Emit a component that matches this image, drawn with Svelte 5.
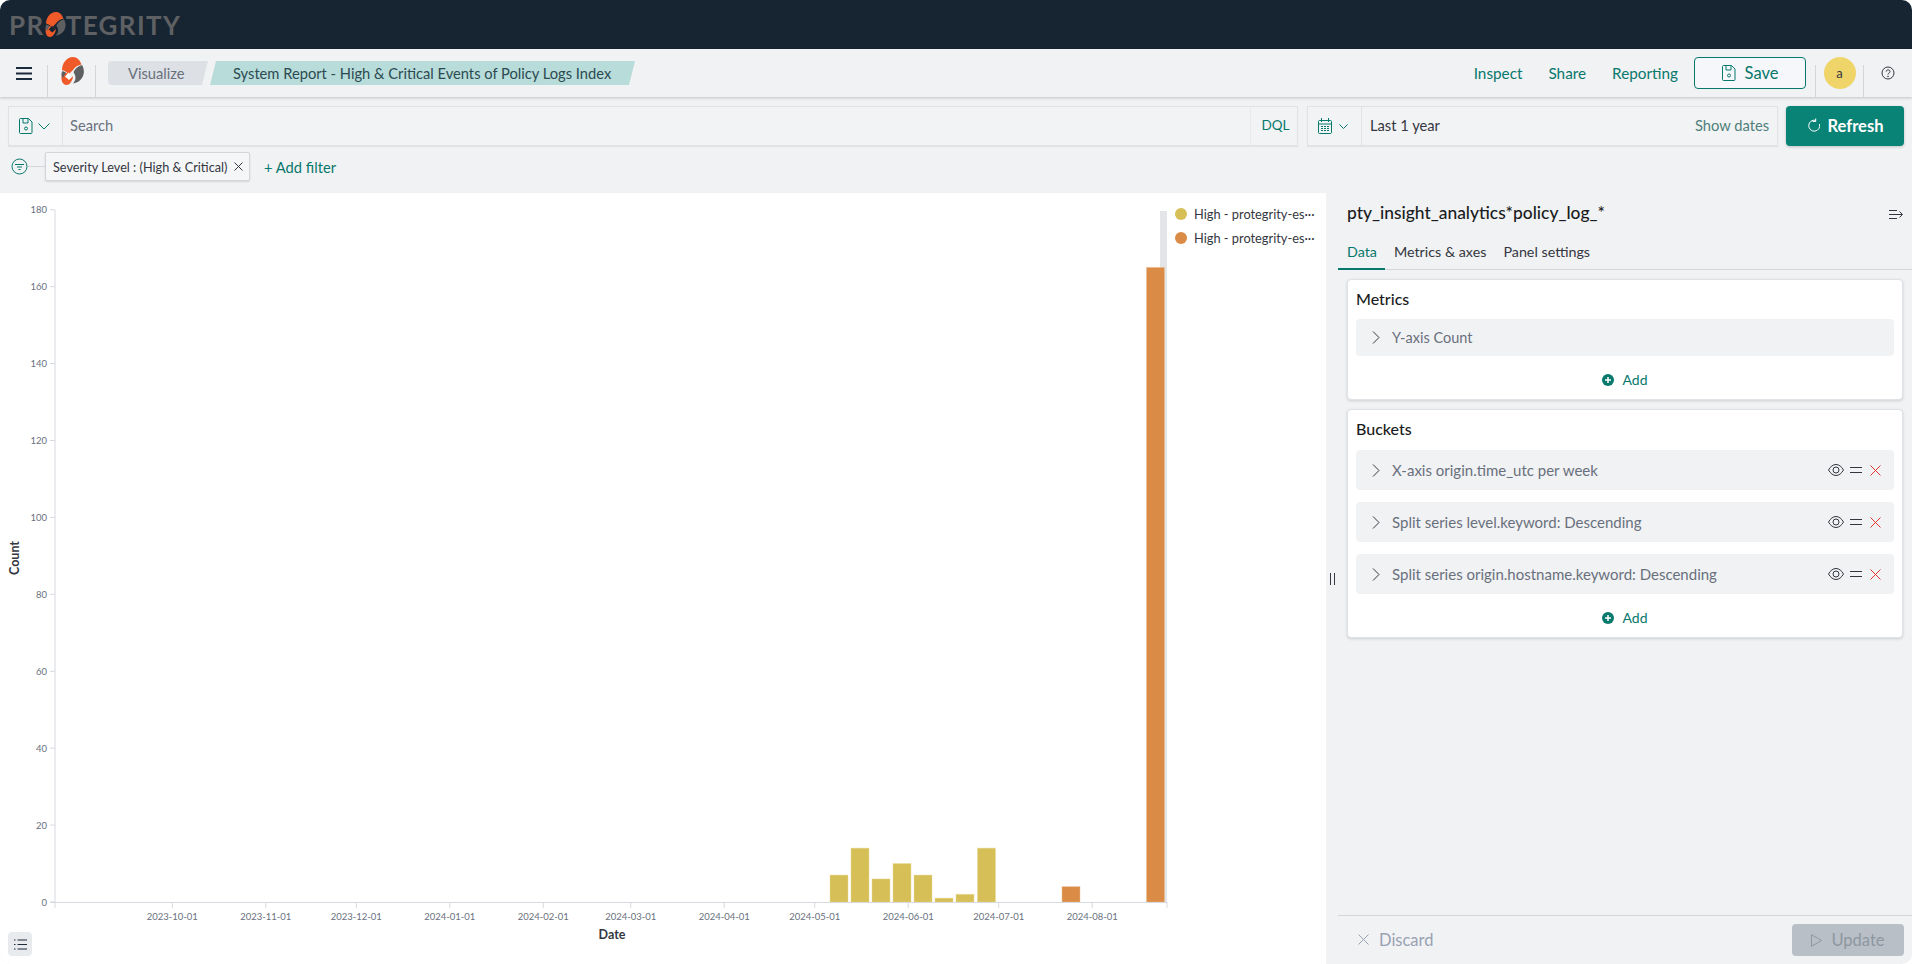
<script>
  // chart geometry, all in page pixels
  const y0 = 902
  const perCount = 3.846
  const yTicks = [0, 20, 40, 60, 80, 100, 120, 140, 160, 180]
  const xTicks = [
    [172.3, '2023-10-01'], [265.8, '2023-11-01'], [356.3, '2023-12-01'], [449.8, '2024-01-01'],
    [543.3, '2024-02-01'], [630.7, '2024-03-01'], [724.2, '2024-04-01'], [814.7, '2024-05-01'],
    [908.2, '2024-06-01'], [998.7, '2024-07-01'], [1092.2, '2024-08-01']
  ]
  const bars = [
    { x: 830, n: 7, c: 'y' }, { x: 851, n: 14, c: 'y' }, { x: 872, n: 6, c: 'y' }, { x: 893, n: 10, c: 'y' },
    { x: 914, n: 7, c: 'y' }, { x: 935, n: 1, c: 'y' }, { x: 956, n: 2, c: 'y' }, { x: 977.5, n: 14, c: 'y' },
    { x: 1062, n: 4, c: 'o' }, { x: 1146.5, n: 165, c: 'o' }
  ]
  const buckets = [
    ['X-axis', 'origin.time_utc per week'],
    ['Split series', 'level.keyword: Descending'],
    ['Split series', 'origin.hostname.keyword: Descending']
  ]
</script>

{#snippet mark(w, h, gap)}
  <svg class="mark" viewBox="0 0 24 28" width={w} height={h}>
    <path fill="#f05a28" d="M2 13C2 6 7 0 13 0c4 0 7 3 8.500 7.500C18 8 15 10 13 13l-4 4c-2-2-4-3-7-4z" />
    <path fill="#5e5f61" d="M22 8c2.500 4 2.500 9 0 13-2 3-5 5-9 5.500 2.500-3 3-5.500 2-8.500l-1.500-3C15.500 11.500 18 9 22 8z" />
    <path fill="#f05a28" d="M2 17c-1.500 5 0 11 4.500 11 3 0 5.500-3.500 6.500-8l-5-4.500z" />
    <path fill="#5e5f61" d="M2.500 14L6 15.500 3 21c-2-2-2-5-.5-7z" />
    <path fill={gap} d="M8.500 15.500l4 4L9 23l-4-3.500z" />
  </svg>
{/snippet}

<div class="app">
  <header class="topbar">
    <div class="brand">
      <span>PR</span>
      {@render mark(22, 25, '#172431')}
      <span>TEGRITY</span>
    </div>
  </header>

  <nav class="navbar">
    <div class="nav-cell menu">
      <svg width="16" height="13" viewBox="0 0 16 13"><path d="M0 1h16M0 6.500h16M0 12h16" stroke="#1a2b3c" stroke-width="2" /></svg>
    </div>
    <div class="nav-cell logo">
      {@render mark(24, 28, '#fff')}
    </div>
    <div class="crumbs">
      <span class="crumb first">Visualize</span>
      <span class="crumb last">System Report - High &amp; Critical Events of Policy Logs Index</span>
    </div>
    <div class="nav-right">
      <a class="nav-link" href="#inspect">Inspect</a>
      <a class="nav-link" href="#share">Share</a>
      <a class="nav-link" href="#reporting">Reporting</a>
      <button class="save">
        <svg width="14" height="16" viewBox="0 0 14 16" fill="none" stroke="#07786c"><path d="M1.500.5h8l3.500 3.500v10.500a1 1 0 0 1-1 1h-10.500a1 1 0 0 1-1-1v-13a1 1 0 0 1 1-1zM4 .5v4.500h5v-4.500" /><circle cx="7" cy="10.500" r="1.500" /></svg>
        Save
      </button>
      <div class="nav-cell avatar-cell"><span class="avatar">a</span></div>
      <div class="nav-cell help">
        <svg width="14" height="14" viewBox="0 0 14 14" fill="none" stroke="#343741"><circle cx="7" cy="7" r="6" /><path d="M5.200 5.600c0-2.300 3.800-2.300 3.800-.1 0 1.500-2 1.500-2 3" /><circle cx="7" cy="10.300" r=".4" /></svg>
      </div>
    </div>
  </nav>

  <div class="querybar">
    <div class="field search">
      <div class="prepend save-q">
        <svg width="14" height="16" viewBox="0 0 14 16" fill="none" stroke="#07786c"><path d="M1.500.5h8l3.500 3.500v10.500a1 1 0 0 1-1 1h-10.500a1 1 0 0 1-1-1v-13a1 1 0 0 1 1-1zM4 .5v4.500h5v-4.500" /><circle cx="7" cy="10.500" r="1.500" /></svg>
        <svg width="12" height="7" viewBox="0 0 12 7" fill="none" stroke="#07786c"><path d="M.5.500l5.500 5.500 5.500-5.500" /></svg>
      </div>
      <span class="placeholder">Search</span>
      <span class="dql">DQL</span>
    </div>
    <div class="field date">
      <div class="prepend cal">
        <svg width="14" height="16" viewBox="0 0 14 16" fill="none" stroke="#07786c"><rect x=".5" y="2.500" width="13" height="13" rx="1" /><path d="M.5 6h13M3.500 0v4M10.500 0v4" /><path stroke-dasharray="2 1" d="M3 8.500h8M3 10.500h8M3 12.500h8" /></svg>
        <svg width="9" height="5" viewBox="0 0 9 5" fill="none" stroke="#07786c"><path d="M.5.500l4 4 4-4" /></svg>
      </div>
      <span class="range">Last 1 year</span>
      <span class="show-dates">Show dates</span>
    </div>
    <button class="refresh">
      <svg width="13" height="15" viewBox="0 0 13 15" fill="none" stroke="#fff"><path d="M8.500 2.300a5.500 5.500 0 1 0 4 3.700M8.700 .5v3h-3" /></svg>
      Refresh
    </button>
  </div>

  <div class="filterbar">
    <svg class="filter-icon" width="17" height="17" viewBox="0 0 17 17" fill="none" stroke="#07786c"><circle cx="8.500" cy="8.500" r="7.500" /><path d="M4 6.500h9M6 9h5M7.500 11.500h2" /></svg>
    <span class="filter-line"></span>
    <span class="pill">Severity Level : (High &amp; Critical)
      <svg width="9" height="9" viewBox="0 0 9 9" stroke="#343741"><path d="M.5.500l8 8M8.500.500l-8 8" /></svg>
    </span>
    <a class="add-filter" href="#add">+ Add filter</a>
  </div>

  <main class="main">
    <section class="chart">
      <svg class="plot" viewBox="0 193 1172 771" width="1172" height="771">
        <rect x="1160" y="211" width="7" height="691" fill="#e3e5e8" />
        {#each bars as b}
          <rect class="bar {b.c}" x={b.x} y={y0 - b.n * perCount} width="18" height={b.n * perCount} />
        {/each}
        <path class="axis" d="M55 210v698M50 {y0}.5h1117M1167 {y0}v6" />
        <text class="title" transform="translate(19 558) rotate(-90)" text-anchor="middle">Count</text>
        <text class="title" x="612" y="939" text-anchor="middle">Date</text>
        {#each yTicks as t}
          <path class="axis" d="M50 {y0 - t * perCount}h5" />
          <text class="tick" x="47" y={y0 - t * perCount + 3.500} text-anchor="end">{t}</text>
        {/each}
        {#each xTicks as [x, label]}
          <path class="axis" d="M{x} {y0}v6" />
          <text class="tick" {x} y="920" text-anchor="middle">{label}</text>
        {/each}
      </svg>
      <div class="legend">
        <div class="legend-item"><i class="dot y"></i>High - protegrity-es···</div>
        <div class="legend-item"><i class="dot o"></i>High - protegrity-es···</div>
      </div>
      <button class="legend-toggle" aria-label="Toggle legend">
        <svg width="13" height="11" viewBox="0 0 13 11" stroke="#1a2b3c"><path d="M0 1h1.500M3.500 1h9.500M0 5.500h1.500M3.500 5.500h9.500M0 10h1.500M3.500 10h9.500" /></svg>
      </button>
    </section>

    <aside class="panel">
      <span class="resizer"></span>
      <div class="panel-head">
        <h2>pty_insight_analytics*policy_log_*</h2>
        <svg width="15" height="9" viewBox="0 0 15 9" fill="none" stroke="#343741"><path d="M0 .5h8M0 4.500h13M0 8.500h8M10.500 1.500l3 3-3 3" /></svg>
      </div>
      <div class="tabs">
        <span class="tab active">Data</span>
        <span class="tab">Metrics &amp; axes</span>
        <span class="tab">Panel settings</span>
      </div>
      <div class="cards">
        <section class="card">
          <h3>Metrics</h3>
          <div class="row metric">
            <svg class="chev" width="8" height="13" viewBox="0 0 8 13" fill="none" stroke="#343741"><path d="M1 .5l6 6-6 6" /></svg>
            <span>Y-axis Count</span>
          </div>
          <div class="add"><svg width="12" height="12" viewBox="0 0 12 12"><circle cx="6" cy="6" r="6" fill="#07786c" /><path d="M6 3v6M3 6h6" stroke="#fff" stroke-width="1.500" /></svg>Add</div>
        </section>
        <section class="card">
          <h3>Buckets</h3>
          <div class="rows">
            {#each buckets as [kind, desc]}
              <div class="row">
                <svg class="chev" width="8" height="13" viewBox="0 0 8 13" fill="none" stroke="#343741"><path d="M1 .5l6 6-6 6" /></svg>
                <span>{kind} {desc}</span>
                <div class="row-actions">
                  <svg width="16" height="12" viewBox="0 0 16 12" fill="none" stroke="#343741"><path d="M.5 6C2.500 2.500 5 .5 8 .5s5.500 2 7.500 5.500c-2 3.500-4.500 5.500-7.500 5.500S2.500 9.500.5 6z" /><circle cx="8" cy="6" r="3" /></svg>
                  <svg width="12" height="6" viewBox="0 0 12 6" stroke="#343741"><path d="M0 .5h12M0 5.500h12" /></svg>
                  <svg class="remove" width="11" height="11" viewBox="0 0 11 11" stroke="#e3342f"><path d="M.5.5l10 10M10.500.5l-10 10" /></svg>
                </div>
              </div>
            {/each}
          </div>
          <div class="add"><svg width="12" height="12" viewBox="0 0 12 12"><circle cx="6" cy="6" r="6" fill="#07786c" /><path d="M6 3v6M3 6h6" stroke="#fff" stroke-width="1.500" /></svg>Add</div>
        </section>
      </div>
      <footer class="panel-foot">
        <span class="discard">
          <svg width="11" height="11" viewBox="0 0 11 11" stroke="#98a2b3"><path d="M.5.5l10 10M10.500.5l-10 10" /></svg>
          Discard
        </span>
        <button class="update" disabled>
          <svg width="11" height="13" viewBox="0 0 11 13" fill="none" stroke="#8d97a2"><path d="M.5.7l10 5.800-10 5.800z" /></svg>
          Update
        </button>
      </footer>
    </aside>
  </main>
</div>

<style>
  :global(body) {
    margin: 0;
    background: #fff;
  }

  .app {
    width: 1912px;
    height: 964px;
    display: flex;
    flex-direction: column;
    overflow: hidden;
    border-radius: 10px;
    background: #f1f2f4;
    font-family: Lato, "Noto Sans", sans-serif;
    font-size: 14.700px;
    color: #343741;
  }

  button {
    font-family: inherit;
    cursor: pointer;
  }

  a {
    text-decoration: none;
  }

  .topbar {
    height: 49px;
    flex-shrink: 0;
    background: #172431;
    display: flex;
    align-items: center;
    padding-left: 9px;
  }

  .brand {
    display: flex;
    align-items: center;
    font-size: 26px;
    font-weight: 700;
    letter-spacing: 1.400px;
    color: #5e6063;
    line-height: 1;
  }

  .brand :global(.mark) {
    margin: 0 0 0 -1px;
  }

  .navbar {
    height: 48px;
    flex-shrink: 0;
    display: flex;
    align-items: flex-end;
    box-shadow: 0 1px 3px rgba(0, 0, 0, 0.2);
    position: relative;
  }

  .nav-cell {
    height: 32px;
    display: flex;
    align-items: center;
    justify-content: center;
    border-right: 1px solid #d3d6da;
    box-sizing: border-box;
  }

  .menu {
    width: 48px;
    padding-bottom: 16px;
  }

  .logo {
    width: 48px;
  }

  .logo :global(.mark) {
    margin-top: -20px;
  }

  .crumbs {
    align-self: center;
    display: flex;
    gap: 2px;
    margin-left: 12px;
  }

  .crumb {
    height: 24px;
    line-height: 24px;
    box-sizing: border-box;
    white-space: nowrap;
  }

  .first {
    width: 100px;
    padding-left: 20px;
    color: #69707d;
    background: #dde0e5;
    border-radius: 4px 0 0 4px;
    clip-path: polygon(0 0, 100% 0, calc(100% - 6px) 100%, 0 100%);
  }

  .last {
    width: 425px;
    padding-left: 23px;
    color: #2d4a52;
    background: #b7dcd9;
    clip-path: polygon(6px 0, 100% 0, calc(100% - 6px) 100%, 0 100%);
  }

  .nav-right {
    margin-left: auto;
    display: flex;
    align-items: center;
    align-self: stretch;
  }

  .nav-link {
    color: #07786c;
    font-size: 15.300px;
    margin-right: 26px;
  }

  .nav-link:nth-child(3) {
    margin-right: 16px;
  }

  .save {
    width: 112px;
    height: 32px;
    box-sizing: border-box;
    border: 1px solid #07786c;
    border-radius: 4px;
    background: #f5f7fa;
    color: #07786c;
    font-size: 16.500px;
    display: flex;
    align-items: center;
    justify-content: center;
    gap: 9px;
  }

  .avatar-cell {
    align-self: flex-end;
    width: 49px;
    margin-left: 9px;
    border-left: 1px solid #d3d6da;
    border-right: 1px solid #d3d6da;
  }

  .avatar {
    width: 32px;
    height: 32px;
    margin-top: -16px;
    border-radius: 50%;
    background: #efd469;
    color: #343741;
    font-size: 13px;
    display: flex;
    align-items: center;
    justify-content: center;
  }

  .help {
    align-self: flex-end;
    width: 48px;
    border: 0;
    padding-bottom: 16px;
    box-sizing: content-box;
    height: 16px;
  }

  .querybar {
    display: flex;
    gap: 8px;
    padding: 9px 8px 0;
    height: 40px;
  }

  .field {
    display: flex;
    align-items: center;
    box-sizing: border-box;
    height: 40px;
    border: 1px solid #e0e2e6;
    box-shadow: 0 1px 1px rgba(0, 0, 0, 0.06);
    background: #f2f3f5;
  }

  .search {
    width: 1290px;
    margin-right: 1px;
  }

  .prepend {
    height: 100%;
    display: flex;
    align-items: center;
    border-right: 1px solid #e0e2e6;
    box-sizing: border-box;
  }

  .save-q {
    width: 54px;
    padding-left: 10px;
    gap: 5px;
  }

  .placeholder {
    margin: -2px 0 0 7px;
    color: #69707d;
    flex: 1;
  }

  .dql {
    width: 47px;
    height: 100%;
    padding-left: 3px;
    line-height: 36px;
    font-size: 13.500px;
    text-align: center;
    color: #07786c;
    border-left: 1px solid #e8eaed;
    box-sizing: border-box;
  }

  .date {
    width: 471px;
  }

  .cal {
    width: 54px;
    padding-left: 10px;
    gap: 7px;
  }

  .range {
    margin: -2px 0 0 8px;
    flex: 1;
  }

  .show-dates {
    color: #4e7f7a;
    margin: -2px 8px 0 0;
  }

  .refresh {
    width: 118px;
    height: 40px;
    padding-bottom: 2px;
    border: 0;
    border-radius: 4px;
    background: #0a8377;
    color: #fff;
    font-size: 16.500px;
    font-weight: 700;
    display: flex;
    align-items: center;
    justify-content: center;
    gap: 8px;
    box-shadow: 0 1px 3px rgba(0, 0, 0, 0.2);
  }

  .filterbar {
    display: flex;
    align-items: center;
    height: 29px;
    padding: 6px 0 12px 11px;
  }

  .filter-icon {
    flex-shrink: 0;
  }

  .filter-line {
    width: 17px;
    height: 1px;
    background: #d3d6da;
  }

  .pill {
    box-sizing: border-box;
    width: 205px;
    height: 29px;
    padding-left: 7px;
    display: flex;
    align-items: center;
    gap: 7px;
    white-space: nowrap;
    font-size: 12.700px;
    background: #f5f6f8;
    border: 1px solid #d3d6da;
    box-shadow: 0 1px 2px rgba(0, 0, 0, 0.12);
    border-radius: 2px;
  }

  .add-filter {
    margin-left: 14px;
    color: #07786c;
  }

  .main {
    flex: 1;
    min-height: 0;
    display: grid;
    grid-template-columns: 1326px 586px;
  }

  .chart {
    position: relative;
    display: flex;
    background: #fff;
  }

  .plot {
    flex-shrink: 0;
    display: block;
  }

  .bar {
    stroke-width: 1;
    stroke-opacity: 0.45;
  }

  .bar.y {
    fill: #d6bf57;
    stroke: #e8da9a;
  }

  .bar.o {
    fill: #da8b45;
    stroke: #edbf96;
  }

  .axis {
    stroke: #d6d9de;
    stroke-width: 1;
    fill: none;
  }

  .tick {
    font-size: 9.500px;
    fill: #69707d;
  }

  .title {
    font-size: 12.500px;
    font-weight: 700;
    fill: #343741;
  }

  .legend {
    display: flex;
    flex-direction: column;
    gap: 8px;
    padding: 13px 0 0 3px;
  }

  .legend-item {
    display: flex;
    align-items: center;
    gap: 7px;
    height: 16px;
    font-size: 12.800px;
    white-space: nowrap;
  }

  .dot {
    width: 12px;
    height: 12px;
    border-radius: 50%;
  }

  .dot.y {
    background: #d6bf57;
  }

  .dot.o {
    background: #da8b45;
  }

  .legend-toggle {
    position: absolute;
    left: 8px;
    bottom: 8px;
    width: 24px;
    height: 24px;
    padding: 0;
    border: 0;
    border-radius: 4px;
    background: #e8eaed;
    display: flex;
    align-items: center;
    justify-content: center;
  }

  .panel {
    position: relative;
    display: flex;
    flex-direction: column;
  }

  .resizer {
    position: absolute;
    left: 4px;
    top: 380px;
    width: 3px;
    height: 12px;
    border-left: 1px solid #343741;
    border-right: 1px solid #343741;
  }

  .panel-head {
    display: flex;
    align-items: center;
    justify-content: space-between;
    height: 42px;
    padding: 0 8px 0 21px;
  }

  .panel-head h2 {
    margin: -3px 0 0;
    font-size: 17.400px;
    font-weight: 500;
    color: #1a1c21;
  }

  .tabs {
    display: flex;
    margin-left: 12px;
    height: 35px;
    box-sizing: border-box;
    border-bottom: 1px solid #d3d6da;
  }

  .tab {
    line-height: 34px;
    padding: 0 8.500px;
    font-size: 14.300px;
    box-sizing: border-box;
    height: 35px;
  }

  .tab.active {
    padding-left: 9px;
    color: #07786c;
    border-bottom: 2px solid #07786c;
  }

  .cards {
    flex: 1;
    display: flex;
    flex-direction: column;
    gap: 9px;
    padding: 9px 9px 0 21px;
  }

  .card {
    background: #fff;
    border: 1px solid #dfe2e6;
    border-radius: 4px;
    box-shadow: 0 1px 3px rgba(0, 0, 0, 0.15);
    padding: 0 8px;
  }

  .card h3 {
    margin: 0;
    height: 39px;
    line-height: 37px;
    font-size: 16px;
    font-weight: 500;
    color: #1a1c21;
  }

  .rows {
    display: flex;
    flex-direction: column;
    gap: 12px;
    margin-top: 1px;
  }

  .row {
    height: 40px;
    display: flex;
    align-items: center;
    background: #f1f2f4;
    border-radius: 4px;
    padding-left: 16px;
    color: #69707d;
    box-sizing: border-box;
    font-size: 15px;
  }

  .row.metric {
    height: 37px;
    font-size: 14.500px;
  }

  .chev {
    margin-right: 12px;
  }

  .row-actions {
    margin-left: auto;
    padding-right: 13px;
    display: flex;
    align-items: center;
    gap: 6px;
  }

  .remove {
    margin-left: 2px;
  }

  .add {
    height: 43px;
    padding-top: 4px;
    box-sizing: border-box;
    display: flex;
    align-items: center;
    justify-content: center;
    gap: 8px;
    font-size: 14px;
    color: #07786c;
  }

  .panel-foot {
    height: 49px;
    box-sizing: border-box;
    margin-left: 12px;
    border-top: 1px solid #d3d6da;
    display: flex;
    align-items: center;
    justify-content: space-between;
    padding: 0 8px 0 20px;
  }

  .discard {
    display: flex;
    align-items: center;
    gap: 10px;
    margin-top: -1px;
    color: #98a2b3;
    font-size: 16.500px;
  }

  .update {
    width: 112px;
    height: 32px;
    border: 0;
    border-radius: 4px;
    background: #b9bfc6;
    color: #8d97a2;
    font-size: 16.500px;
    display: flex;
    align-items: center;
    justify-content: center;
    gap: 9px;
  }
</style>
